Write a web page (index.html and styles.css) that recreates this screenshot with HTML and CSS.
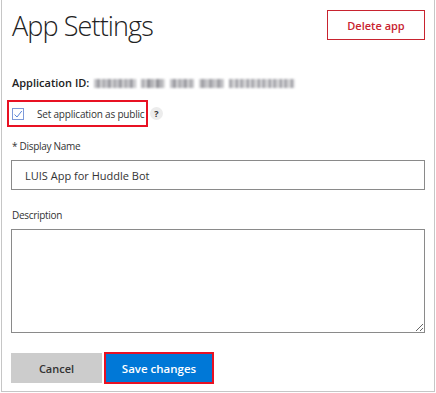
FILE: index.html
```html
<!DOCTYPE html>
<html lang="en">
<head>
  <meta charset="UTF-8" />
  <meta name="viewport" content="width=device-width, initial-scale=1.0"/>
  <title>App Settings</title>
  <link rel="stylesheet" href="styles.css">
</head>
<body>

  <div class="panel">
    <header class="head">
      <h1>App Settings</h1>
      <button class="btn-delete">Delete app</button>
    </header>

    <div class="app-id">
      <span class="app-id-label">Application ID:</span>
      <span class="masked">
        <span class="seg s1"></span>
        <span class="seg s2"></span>
        <span class="seg s3"></span>
        <span class="seg s4"></span>
        <span class="seg s5"></span>
      </span>
    </div>

    <div class="public-row">
      <label class="public">
        <span class="check">
          <svg width="10" height="10" viewBox="0 0 10 10">
            <path d="M1.5 5.5 L4 8 L8.8 2" fill="none" stroke="#5b86d8" stroke-width="1"/>
          </svg>
        </span>
        Set application as public
      </label>
      <span class="help">?</span>
    </div>

    <div class="field">
      <label class="field-label">* Display Name</label>
      <input class="text-input" type="text" value="LUIS App for Huddle Bot">
    </div>

    <div class="field">
      <label class="field-label">Description</label>
      <textarea class="text-area"></textarea>
    </div>

    <div class="actions">
      <button class="btn-cancel">Cancel</button>
      <button class="btn-save">Save changes</button>
    </div>
  </div>

</body>
</html>
```

FILE: styles.css
```css
body {
  margin: 0;
  padding: 0;
  background: #fff;
  font-family: 'Open Sans', 'Noto Sans', sans-serif;
  color: #333;
}

.panel {
  box-sizing: border-box;
  width: 434px;
  height: 392px;
  margin-left: 1px;
  padding: 0 9px;
  border: 1px solid #c6c6c6;
  border-top: none;
}

.head {
  display: flex;
  justify-content: space-between;
  align-items: flex-start;
  padding-top: 10px;
}

h1 {
  margin: 0;
  padding-top: 1px;
  padding-left: 1px;
  font-size: 27px;
  font-weight: 300;
  line-height: 30px;
  color: #222;
  letter-spacing: -0.9px;
}

.btn-delete {
  box-sizing: border-box;
  width: 98px;
  height: 30px;
  background: #fff;
  border: 1px solid #c8232f;
  color: #c8232f;
  font-family: inherit;
  font-size: 11px;
  font-weight: 600;
  padding: 0;
}

.app-id {
  margin-top: 34px;
  height: 16px;
  line-height: 16px;
  font-size: 11px;
  display: flex;
  align-items: center;
}

.app-id-label {
  font-weight: 600;
  color: #222;
  padding-left: 1px;
}

.masked {
  display: flex;
  gap: 5px;
  margin-left: 5px;
  filter: blur(0.9px);
}

.seg {
  display: block;
  height: 9px;
  background: repeating-linear-gradient(90deg, #c4c4c8 0 3px, #9a9aa0 3px 6px, #dadadc 6px 8px, #aeaeb2 8px 11px);
}
.s1 { width: 42px; }
.s2 { width: 24px; background: repeating-linear-gradient(90deg, #b4b4b8 0 4px, #d8d8da 4px 6px, #909096 6px 9px); }
.s3 { width: 24px; }
.s4 { width: 25px; background: repeating-linear-gradient(90deg, #d0d0d2 0 2px, #9e9ea4 2px 5px, #bebec2 5px 8px); }
.s5 { width: 66px; background: repeating-linear-gradient(90deg, #a8a8ad 0 3px, #d2d2d4 3px 7px, #96969c 7px 9px, #e2e2e4 9px 11px); }

.public-row {
  display: flex;
  align-items: center;
  margin-top: 9px;
  margin-left: -4px;
}

.public {
  box-sizing: border-box;
  display: flex;
  align-items: center;
  width: 141px;
  height: 27px;
  border: 2px solid #e81123;
  padding-left: 3px;
  font-size: 10px;
  letter-spacing: -0.2px;
  color: #333;
  white-space: nowrap;
}

.check {
  box-sizing: border-box;
  display: flex;
  align-items: center;
  justify-content: center;
  width: 12px;
  height: 12px;
  border: 1px solid #7d9ad9;
  margin-right: 13px;
}

.help {
  display: flex;
  align-items: center;
  justify-content: center;
  width: 13px;
  height: 13px;
  margin-left: 2px;
  border-radius: 50%;
  background: #ececec;
  font-size: 9px;
  font-weight: 700;
  color: #333;
}

.field-label {
  display: block;
  font-size: 10px;
  letter-spacing: -0.3px;
  line-height: 14px;
  color: #333;
  padding-left: 1px;
}

.public-row + .field .field-label {
  margin-top: 12px;
}

.field + .field .field-label {
  margin-top: 18px;
}

.text-input,
.text-area {
  box-sizing: border-box;
  display: block;
  width: 414px;
  margin-top: 7px;
  border: 1px solid #8a8a8a;
  font-family: inherit;
  color: #333;
  border-radius: 0;
}

.text-input {
  height: 30px;
  padding: 0 13px;
  font-size: 11px;
}

.text-area {
  height: 104px;
  resize: both;
}

.actions {
  display: flex;
  align-items: center;
  margin-top: 19px;
}

.btn-cancel,
.btn-save {
  font-family: inherit;
  font-size: 11px;
  font-weight: 600;
  padding: 0;
}

.btn-cancel {
  width: 91px;
  height: 30px;
  background: #cccccc;
  border: none;
  color: #333;
}

.btn-save {
  box-sizing: border-box;
  width: 110px;
  height: 32px;
  margin-left: 2px;
  background: #0078d7;
  border: 2px solid #e81123;
  color: #fff;
  font-size: 11.5px;
}
```
